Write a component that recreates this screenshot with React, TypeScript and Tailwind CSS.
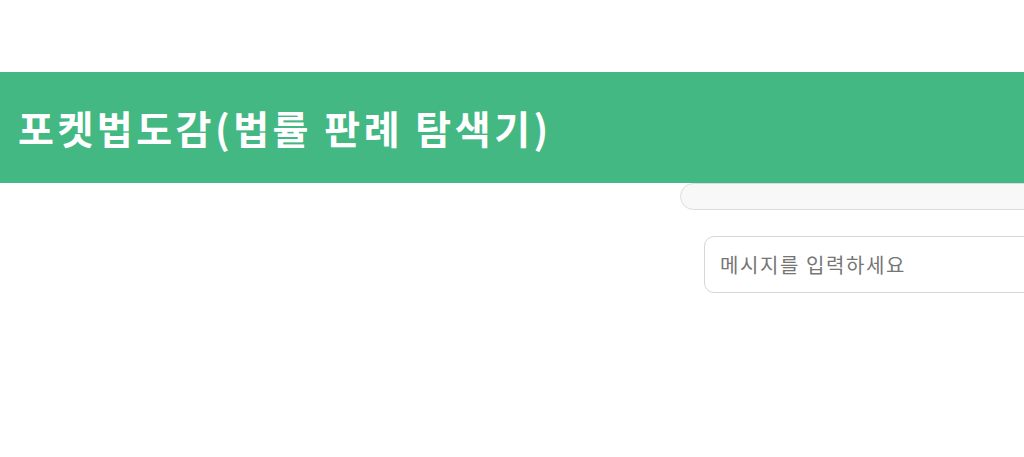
import React from 'react';

const font = { fontFamily: '"Noto Sans CJK KR", "Noto Sans", sans-serif' };

export default function App() {
  return (
    <div className="w-[1024px] h-[457px] overflow-hidden bg-white" style={font}>
      <div className="h-[72px]" />
      <header className="h-[111px] bg-[#43b883] flex items-center px-[18px]">
        <h1 className="text-[39px] font-bold text-white leading-none tracking-[3.5px]">포켓법도감(법률 판례 탐색기)</h1>
      </header>
      <div className="flex">
        <div className="w-[680px] shrink-0" />
        <div className="w-[400px] shrink-0">
          <div className="h-[27px] rounded-[14px] border border-[#dcdcdc] bg-[#f8f8f8]" />
          <div className="pl-[24px] pt-[26px]">
            <input
              type="text"
              placeholder="메시지를 입력하세요"
              className="w-full h-[57px] rounded-[10px] border border-[#d6d6d6] px-[15px] text-[20px] tracking-[1.6px] text-[#333] placeholder:text-[#757575] outline-none"
              style={font}
            />
          </div>
        </div>
      </div>
    </div>
  );
}
